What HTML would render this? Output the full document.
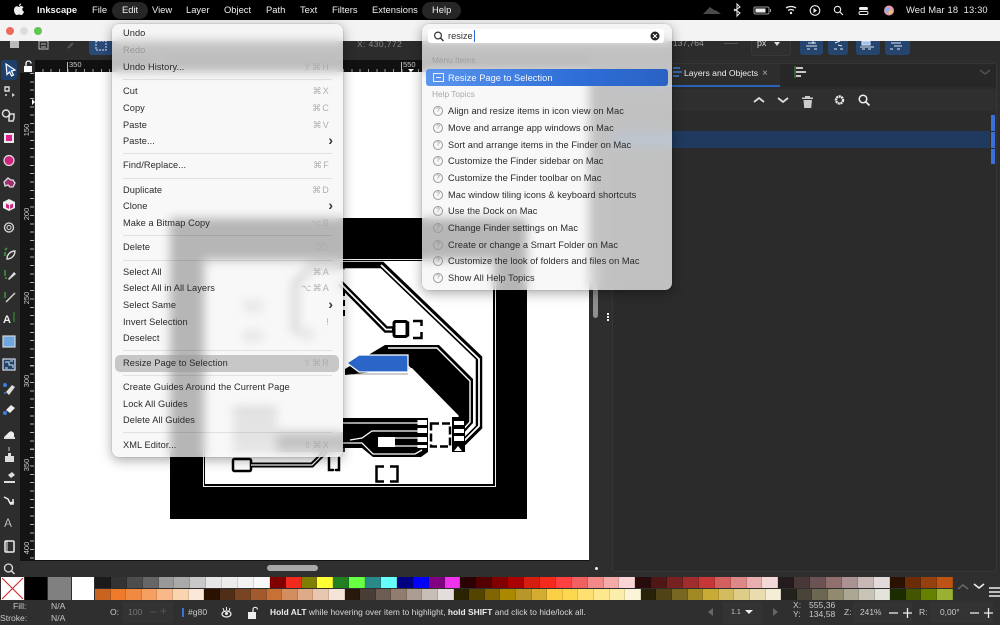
<!DOCTYPE html>
<html><head><meta charset="utf-8"><style>
*{box-sizing:border-box}
html,body{margin:0;padding:0;background:#2c2c2c}
#r{position:relative;width:1000px;height:625px;overflow:hidden;font-family:"Liberation Sans",sans-serif;background:#2d2d2d}
.a{position:absolute;white-space:nowrap}
.mb{position:absolute;top:0;height:20px;line-height:20px;font-size:9.4px;color:#eee;white-space:nowrap}
.menu{position:absolute;border-radius:7px;background:rgba(246,246,246,.74);backdrop-filter:blur(5px);-webkit-backdrop-filter:blur(5px);box-shadow:0 3px 12px rgba(0,0,0,.35),0 0 1px rgba(0,0,0,.4)}
.menu .t{position:absolute;left:11px;font-size:9.25px;line-height:12px;height:12px;color:#2a2a2a;white-space:nowrap;letter-spacing:.06px}
.menu .k{position:absolute;right:13px;font-size:9px;line-height:12px;height:12px;color:#aeaeae;white-space:nowrap;letter-spacing:1.2px}
.menu .s{position:absolute;left:11px;right:11px;height:1px;background:rgba(0,0,0,.09)}
.menu .c{position:absolute;right:10px;font-size:14px;line-height:11px;height:12px;color:#333;font-weight:bold}
.h{position:absolute;left:26px;font-size:9.25px;line-height:12px;height:12px;color:#2a2a2a;white-space:nowrap;letter-spacing:.05px}
.q{position:absolute;left:11px;width:10px;height:10px;border:1px solid #999;border-radius:50%;font-size:6.5px;line-height:8px;text-align:center;color:#888}
.pal{position:absolute;left:95px;width:858px;height:11px;display:flex}
.pal i{flex:1;display:block;border-right:1px solid rgba(0,0,0,.12)}
.g{color:#c9c9c9;font-size:8.6px;position:absolute;white-space:nowrap;line-height:11px}
.vr{position:absolute;left:21px;width:12px;height:20px;font-size:7.5px;color:#ccc}
.vr span{position:absolute;left:-4px;top:4px;width:20px;text-align:center;transform:rotate(-90deg);line-height:12px}
</style></head><body><div id="r">

<!-- canvas -->
<div class="a" style="left:35px;top:72px;width:554px;height:488px;background:#fff"></div>
<svg class="a" style="left:0;top:0" width="1000" height="625" viewBox="0 0 1000 625">
<rect x="170" y="218" width="357" height="301" fill="#000"/>
<rect x="203.500" y="259.500" width="292" height="227" fill="none" stroke="#eee" stroke-width="1"/>
<rect x="205" y="261" width="288" height="223" fill="#fff"/>
<!-- hidden-under-menu faint shapes -->
<path fill="none" stroke="#777" stroke-width="7" d="M345 266H312L295 284V334"/>
<path d="M233 407h44v10h-44zM233 421h44v8h-44zM233 433h44v8h-44zM233 445h44v6h-44z" fill="#888"/>
<path d="M243 300h20v12h-20zM243 330h20v12h-20zM300 328h14v12h-14z" fill="#bbb"/>
<path d="M277 432H345V452H277Z" fill="#333"/>
<!-- trace A -->
<path d="M340 265H382L479 358V427L463 443" fill="none" stroke="#000" stroke-width="6.500"/>
<path d="M381 265L479 359V426L462 443" fill="none" stroke="#fff" stroke-width="1.800"/>
<!-- trace B -->
<path d="M340 283L386 329.500H395" fill="none" stroke="#000" stroke-width="6.500"/>
<path d="M340 283L386 329.500H392" fill="none" stroke="#fff" stroke-width="1.700"/>
<rect x="394" y="321.500" width="13" height="15" rx="1.500" fill="#fff" stroke="#000" stroke-width="3"/>
<path fill="none" stroke="#000" stroke-width="2.500" d="M408 321.500v15M413 321H421.500V326M421.500 332V338H413"/>
<path d="M344 290v30" stroke="#000" stroke-width="2" stroke-dasharray="6 4"/>
<!-- big area -->
<path fill="#000" d="M385 345H439L473 379V423L462 435L458 415L412 368L345 375L345 369Z"/>
<path fill="none" stroke="#fff" stroke-width="1.400" d="M388 348H437L470 381V422L461 432"/>
<path fill="none" stroke="#fff" stroke-width="1.400" d="M408 366L458 416V420"/>
<!-- lower block -->
<path fill="#000" d="M343 418H428V452L421 457H373L362 448H343Z"/>
<path fill="none" stroke="#fff" stroke-width="1.300" d="M343 423H418M343 443H362L373 454H415L422 450M350 440L362 438L372 431H418M395 438H418M395 446H418"/>
<rect x="378" y="437" width="17" height="10" fill="#fff"/>
<path d="M417.500 420h9.500v5h-9.500zM417.500 428h9.500v5h-9.500zM417.500 437h9.500v5h-9.500zM417.500 445h9.500v3h-9.500z" fill="#fff"/>
<!-- center box -->
<path fill="none" stroke="#000" stroke-width="2.500" stroke-dasharray="8 3" d="M431 423.500H450V446.500H431Z"/>
<!-- right pads -->
<path fill="#000" d="M452 417H465V452H452Z"/>
<path d="M454 421h10v4h-10zM454 429h10v4h-10zM454 436h10v5h-10z" fill="#fff"/>
<path d="M458 446l4 5h-8z" fill="#fff"/>
<path fill="none" stroke="#000" stroke-width="2.500" d="M384 466.500H376.500V481.500H384M390 466.500H397.500V481.500H390"/>
<path fill="none" stroke="#000" stroke-width="2.500" stroke-linecap="round" d="M329 458V470H333M339 458V470H336"/>
<rect x="233" y="459" width="18" height="12" rx="1.500" fill="#fff" stroke="#000" stroke-width="2.500"/>
<path fill="none" stroke="#000" stroke-width="5" d="M251 465H312L326 451"/>
<path fill="none" stroke="#fff" stroke-width="1.200" d="M251 465H312L326 451"/>
<path d="M347 363L359 355H408V372H359Z" fill="#2a66c8" stroke="#fff" stroke-width="1.300"/>
<path d="M352 374H408" stroke="#000" stroke-opacity=".2" stroke-width="2"/>
</svg>

<!-- rulers -->
<div class="a" style="left:34px;top:60px;width:555px;height:12px;background:repeating-linear-gradient(90deg,#999 0 1px,transparent 1px 8.35px) 0 9px/100% 3px no-repeat,#111"></div>
<div class="a" style="left:20px;top:60px;width:14px;height:500px;background:#141414"></div>
<div class="a" style="left:30px;top:73px;width:4px;height:487px;background:repeating-linear-gradient(180deg,#aaa 0 1px,transparent 1px 8.35px)"></div>
<div class="a" style="left:20px;top:60px;width:15px;height:13px;background:#2a2a2a"></div>
<div class="g" style="left:69px;top:59px;font-size:7.5px">350</div>
<div class="a" style="left:67px;top:62px;width:1px;height:10px;background:#bbb"></div>
<div class="g" style="left:403px;top:59px;font-size:7.5px">550</div>
<div class="a" style="left:401px;top:62px;width:1px;height:10px;background:#bbb"></div>
<div class="g" style="left:152px;top:59px;font-size:7.5px">400</div>
<div class="a" style="left:408px;top:69px;width:0;height:0;border:3px solid transparent;border-top-color:#fff"></div>
<div class="vr" style="top:120px"><span>150</span></div>
<div class="vr" style="top:204px"><span>200</span></div>
<div class="vr" style="top:288px"><span>250</span></div>
<div class="vr" style="top:371px"><span>300</span></div>
<div class="vr" style="top:455px"><span>350</span></div>
<div class="vr" style="top:538px"><span>400</span></div>
<div class="a" style="left:32px;top:99px;width:0;height:0;border:3px solid transparent;border-left-color:#fff"></div>
<svg class="a" style="left:22px;top:60px" width="12" height="13"><path d="M2 6h8v6H2z" fill="#fff"/><path d="M4 6V3.500a2.500 2.500 0 0 1 5 0" fill="none" stroke="#fff" stroke-width="1.300"/></svg>

<!-- top toolbar -->
<div class="a" style="left:0;top:41px;width:1000px;height:19px;background:#2c2c2c"></div>
<div class="a" style="left:89px;top:41px;width:24px;height:14px;background:#2b4a78;border-radius:0 0 3px 3px"></div>
<svg class="a" style="left:0;top:41px" width="120" height="15"><path d="M10 0h9v7h-9z" fill="#bbb"/><path d="M39 0h9v8h-9z" fill="none" stroke="#bbb"/><path d="M41 3h5M41 6h5" stroke="#bbb"/><path d="M68 7l5-5" stroke="#555" stroke-width="2"/><path d="M96 0h10v9H96z" fill="none" stroke="#d8e4f5" stroke-dasharray="2 1"/></svg>
<div class="g" style="left:357px;top:39px;color:#888;font-size:8.5px;letter-spacing:.4px">X: 430,772</div>
<div class="g" style="left:673px;top:38px;color:#999;font-size:8.5px">137,764</div>
<div class="a" style="left:724px;top:43px;width:14px;height:1px;background:#555"></div>
<div class="a" style="left:751px;top:41px;width:40px;height:15px;background:#2f2f2f;border:1px solid #383838;border-top:0;border-radius:0 0 3px 3px"></div>
<div class="g" style="left:757px;top:38px;font-size:8.8px;color:#ddd">px</div>
<div class="a" style="left:774px;top:42px;width:0;height:0;border:3.500px solid transparent;border-top:4px solid #ddd"></div>
<div class="a" style="left:800px;top:41px;width:23px;height:14px;background:#25446e;border-radius:0 0 3px 3px"></div>
<div class="a" style="left:828px;top:41px;width:20px;height:14px;background:#25446e;border-radius:0 0 3px 3px"></div>
<div class="a" style="left:856px;top:41px;width:24px;height:14px;background:#25446e;border-radius:0 0 3px 3px"></div>
<div class="a" style="left:885px;top:41px;width:25px;height:14px;background:#25446e;border-radius:0 0 3px 3px"></div>
<svg class="a" style="left:800px;top:41px" width="112" height="14"><g stroke="#dfe8f4" stroke-width="1" fill="none"><path d="M8 2h8M13 0v3M6 5h11M7 8h3M14 8h3"/><path d="M35 2l5-2M38 4l4 1M34 8h3M40 8h3"/><path d="M62 0h8v4h-8z" fill="#9fc0e8"/><path d="M60 6h14M62 8h3M68 8h3"/><path d="M91 2h10M94 5h8M90 8h3M97 8h3"/></g></svg>

<!-- left toolbox -->
<div class="a" style="left:0;top:60px;width:20px;height:516px;background:#2d2d2d"></div>
<div class="a" style="left:1px;top:60px;width:16px;height:20px;background:#1e3e6c;border-radius:3px"></div>
<svg class="a" style="left:0;top:60px" width="20" height="516" viewBox="0 60 20 516">
<path d="M6 64l9 6-3.500 1 2 4-2 1-2-4-2.500 2.500z" fill="#2a5ea8" stroke="#fff" stroke-width="1.200"/>
<path d="M5 87h4v4h-4zM6 94v2M9 89" fill="none" stroke="#ddd" stroke-width="1.400"/><path d="M12 93l3 2-3 2z" fill="#ccc"/>
<path d="M6 110a3.500 3.500 0 1 1 0 7a3.500 3.500 0 1 1 0-7M10 114h4v4l-1 3h-4v-4z" fill="none" stroke="#ddd" stroke-width="1.500"/>
<rect x="4" y="133" width="10" height="10" fill="#e9e9e9"/><rect x="6" y="135" width="6" height="6" fill="#e0218a"/>
<circle cx="9" cy="160.500" r="5" fill="#d0257f" stroke="#ddd" stroke-width="1.200"/>
<path d="M4 182l4-4 3 2 2 0 2 3-2 4h-3l-2-2-3 1z" fill="#a03070" stroke="#ddd" stroke-width="1.300"/>
<path d="M9 199l6 3v6l-6 3-6-3v-6z" fill="#eee"/><path d="M9 205l-3-1.500v4l3 1.500zM10 205v4l3-1.500v-4z" fill="#d0257f"/>
<circle cx="9" cy="227.500" r="4.500" fill="none" stroke="#ddd" stroke-width="1.300"/><circle cx="9" cy="227.500" r="2" fill="none" stroke="#ddd"/>
<path d="M5 250l2-2M5 256v-4" stroke="#3c9a3c" stroke-width="1.600"/><path d="M7 259c0-5 4-8 8-8-0 4-3 8-8 8z" fill="none" stroke="#ddd" stroke-width="1.400"/>
<path d="M5 270v6M5 278h2" stroke="#3c9a3c" stroke-width="1.500"/><path d="M8 279l6-7 2 2-7 6z" fill="#ddd"/>
<path d="M5 292v6" stroke="#3c9a3c" stroke-width="1.500"/><path d="M6 302l9-9" stroke="#ddd" stroke-width="1.300"/>
<text x="3" y="323" font-family="Liberation Sans" font-weight="bold" font-size="11" fill="#eee">A</text><path d="M14 312v10" stroke="#3c9a3c" stroke-width="1"/>
<rect x="3" y="336" width="12" height="11" fill="#6ea8df"/><rect x="3" y="336" width="12" height="11" fill="none" stroke="#cfd8e0" stroke-width="1.200"/>
<rect x="3" y="359" width="12" height="11" fill="#1f4468" stroke="#dde" stroke-width="1.200"/><path d="M5 362h4v3h4v3M13 361h-3M5 368h3" stroke="#cfe0f0" fill="none"/>
<path d="M6 392l6-7 3 2-6 8z" fill="#ddd"/><circle cx="5" cy="385" r="2" fill="#3a7fe0"/><circle cx="5" cy="393" r="1" fill="#3a7fe0"/>
<path d="M6 410l5-5 4 3-5 5z" fill="#eee"/><circle cx="5" cy="413" r="2" fill="#3a7fe0"/>
<path d="M4 438c1-3 3-3 4-5l3-2 3 2v5z" fill="#eee"/><path d="M4 437h11v2H4z" fill="#ddd"/>
<path d="M5 456h9v6H5zM8 453h3v3H8z" fill="#ddd"/><path d="M8 447h2v4H8z" fill="#777"/>
<path d="M4 481h11v2H4zM8 475l4-3 3 3-4 3z" fill="#ddd"/>
<path d="M4 497l4 2 2 4 4-1M13 499v5h-3" fill="none" stroke="#eee" stroke-width="1.500"/>
<text x="4" y="527" font-family="Liberation Sans" font-size="12" fill="#ddd" stroke="#2d2d2d" stroke-width=".2">A</text>
<rect x="5" y="541" width="9" height="11" rx="1" fill="none" stroke="#eee" stroke-width="1.500"/><path d="M7 541v11" stroke="#eee"/>
<circle cx="8.500" cy="568" r="4" fill="none" stroke="#ddd" stroke-width="1.300"/><path d="M11.500 571l3 3" stroke="#ddd" stroke-width="1.500"/>
</svg>

<!-- right area -->
<div class="a" style="left:589px;top:60px;width:23px;height:516px;background:#2e2e2e"></div>
<div class="a" style="left:593px;top:260px;width:5px;height:58px;background:#8f8f8f;border-radius:3px"></div>
<div class="a" style="left:607px;top:313px;width:2px;height:2px;background:#eee;box-shadow:0 3px #eee,0 6px #eee"></div>
<div class="a" style="left:595px;top:567px;width:3px;height:3px;background:#eee;border-radius:50%"></div>
<div class="a" style="left:612px;top:63px;width:385px;height:509px;background:#2b2b2b;border:1px solid #363636;border-radius:3px"></div>
<div class="a" style="left:613px;top:64px;width:383px;height:23px;background:#272727"></div>
<div class="a" style="left:613px;top:64px;width:167px;height:21px;background:#2d2d2d"></div>
<div class="a" style="left:613px;top:89px;width:383px;height:22px;background:#2f2f2f;border-radius:3px"></div>
<div class="a" style="left:612px;top:85px;width:168px;height:2px;background:#2a62b8"></div>
<div class="a" style="left:684px;top:68px;font-size:8.6px;color:#eee;line-height:11px">Layers and Objects</div>
<div class="a" style="left:762px;top:68px;font-size:10px;color:#aaa;line-height:11px">×</div>
<svg class="a" style="left:672px;top:60px" width="330" height="60">
<path d="M1 8h7M1 12h9M1 16h6" stroke="#3a7fd5" stroke-width="1.600" fill="none"/>
<path d="M123 6v12" stroke="#3c9a3c"/><path d="M124 8h7M124 12h10M124 16h5" stroke="#ddd" stroke-width="1.800"/>
<path d="M308 10l5 4 5-4" stroke="#555" stroke-width="1.400" fill="none"/>
<path d="M82 42l5-4 5 4M106 38l5 4 5-4" stroke="#ddd" stroke-width="1.800" fill="none"/>
<path d="M133 36h5v1.500h3v1.500h-11v-1.500h3zM131.500 40h8.500l-.8 8h-7z" fill="#ccc"/>
<circle cx="167.500" cy="40" r="3.500" fill="none" stroke="#eee" stroke-width="2.400" stroke-dasharray="2 .6"/>
<circle cx="191" cy="39" r="3.800" fill="none" stroke="#eee" stroke-width="1.500"/><path d="M194 42l3.500 3.500" stroke="#eee" stroke-width="1.800"/>
</svg>
<div class="a" style="left:612px;top:131px;width:378px;height:17px;background:#1f3a5e"></div>
<div class="a" style="left:991px;top:115px;width:4px;height:16px;background:#3a70d8"></div>
<div class="a" style="left:991px;top:132px;width:4px;height:16px;background:#3a70d8"></div>
<div class="a" style="left:991px;top:149px;width:4px;height:15px;background:#3a70d8"></div>

<!-- bottom bars -->
<div class="a" style="left:20px;top:560px;width:569px;height:1px;background:#111"></div>
<div class="a" style="left:20px;top:561px;width:569px;height:15px;background:#2f2f2f"></div>
<div class="a" style="left:267px;top:565px;width:51px;height:6px;background:#a9a9a9;border-radius:3px"></div>
<div class="a" style="left:0;top:576px;width:1000px;height:49px;background:#2f2f2f"></div>
<svg class="a" style="left:1px;top:577px" width="23" height="23"><rect width="23" height="23" fill="#fff"/><path d="M1 1l21 21M22 1L1 22" stroke="#c33" stroke-width="1.200"/></svg>
<div class="a" style="left:25px;top:577px;width:22px;height:23px;background:#000"></div>
<div class="a" style="left:48px;top:577px;width:23px;height:23px;background:#808080"></div>
<div class="a" style="left:72px;top:577px;width:22px;height:23px;background:#fff"></div>
<div class="pal" style="top:577px"><i style="background:#1a1a1a"></i><i style="background:#333"></i><i style="background:#4d4d4d"></i><i style="background:#666"></i><i style="background:#999"></i><i style="background:#aaa"></i><i style="background:#c8c8c8"></i><i style="background:#e6e6e6"></i><i style="background:#ececec"></i><i style="background:#f2f2f2"></i><i style="background:#f9f9f9"></i><i style="background:#800000"></i><i style="background:#f22a1d"></i><i style="background:#808000"></i><i style="background:#ffff33"></i><i style="background:#228020"></i><i style="background:#66ff44"></i><i style="background:#2a8a8a"></i><i style="background:#66ffff"></i><i style="background:#000080"></i><i style="background:#0000ff"></i><i style="background:#800080"></i><i style="background:#ee33ee"></i><i style="background:#2b0000"></i><i style="background:#550000"></i><i style="background:#800000"></i><i style="background:#aa0000"></i><i style="background:#d41f10"></i><i style="background:#f42a1c"></i><i style="background:#ff4040"></i><i style="background:#f06060"></i><i style="background:#f28888"></i><i style="background:#f5aaaa"></i><i style="background:#fbd5d5"></i><i style="background:#280b0b"></i><i style="background:#501616"></i><i style="background:#782121"></i><i style="background:#a02c2c"></i><i style="background:#c83737"></i><i style="background:#d35f5f"></i><i style="background:#de8787"></i><i style="background:#e9afaf"></i><i style="background:#f4d7d7"></i><i style="background:#241c1c"></i><i style="background:#483737"></i><i style="background:#6c5353"></i><i style="background:#916f6f"></i><i style="background:#ac9393"></i><i style="background:#c8b7b7"></i><i style="background:#e3dbdb"></i><i style="background:#2b1100"></i><i style="background:#6b2d08"></i><i style="background:#94400f"></i><i style="background:#bd5416"></i></div>
<div class="pal" style="top:589px"><i style="background:#c86420"></i><i style="background:#ef7a2b"></i><i style="background:#f08a40"></i><i style="background:#f5a060"></i><i style="background:#f8b888"></i><i style="background:#fad4b0"></i><i style="background:#fbe8d8"></i><i style="background:#2b1100"></i><i style="background:#502d16"></i><i style="background:#784421"></i><i style="background:#a05a2c"></i><i style="background:#c87137"></i><i style="background:#d38d5f"></i><i style="background:#deaa87"></i><i style="background:#e9c6af"></i><i style="background:#f4e3d7"></i><i style="background:#28170b"></i><i style="background:#483e37"></i><i style="background:#6c5d53"></i><i style="background:#917c6f"></i><i style="background:#ac9d93"></i><i style="background:#c8beb7"></i><i style="background:#e3dedb"></i><i style="background:#2b2200"></i><i style="background:#554400"></i><i style="background:#806600"></i><i style="background:#aa8800"></i><i style="background:#b8962a"></i><i style="background:#d4ac30"></i><i style="background:#fbcf45"></i><i style="background:#fcd84f"></i><i style="background:#fde070"></i><i style="background:#fde890"></i><i style="background:#fbeeaa"></i><i style="background:#fcf4d8"></i><i style="background:#28220b"></i><i style="background:#504416"></i><i style="background:#786721"></i><i style="background:#a08922"></i><i style="background:#c8ab37"></i><i style="background:#d3bc5f"></i><i style="background:#decd87"></i><i style="background:#e9ddaf"></i><i style="background:#f4eed7"></i><i style="background:#24221c"></i><i style="background:#484437"></i><i style="background:#6c6753"></i><i style="background:#918a6f"></i><i style="background:#aca793"></i><i style="background:#c8c4b7"></i><i style="background:#e3e2db"></i><i style="background:#1c2b00"></i><i style="background:#445500"></i><i style="background:#668000"></i><i style="background:#99b033"></i></div>
<svg class="a" style="left:955px;top:577px" width="45" height="24"><path d="M3 12l5-4 5 4" stroke="#666" stroke-width="1.500" fill="none"/><path d="M19 7l5 4 5-4" stroke="#eee" stroke-width="1.500" fill="none"/><path d="M34 11h11M34 15h11M34 19h11" stroke="#eee" stroke-width="1.500"/></svg>

<!-- status -->
<div class="g" style="left:13px;top:601px">Fill:</div><div class="g" style="left:51px;top:601px">N/A</div>
<div class="g" style="left:0;top:613px">Stroke:</div><div class="g" style="left:51px;top:613px">N/A</div>
<div class="g" style="left:110px;top:607px">O:</div>
<div class="a" style="left:123px;top:602px;width:50px;height:21px;background:#333;border-radius:2px"></div>
<div class="g" style="left:128px;top:607px;color:#777">100</div>
<div class="g" style="left:150px;top:606px;color:#555;font-size:12px">– +</div>
<div class="a" style="left:182px;top:608px;width:2px;height:9px;background:#3a70d8"></div>
<div class="g" style="left:188px;top:607px">#g80</div>
<svg class="a" style="left:220px;top:604px" width="44" height="17"><ellipse cx="6.500" cy="10" rx="4.500" ry="3" fill="none" stroke="#eee" stroke-width="1.300"/><circle cx="6.500" cy="9.500" r="1.500" fill="#eee"/><path d="M3 4l1 3M6.500 3v3M10 4l-1 3" stroke="#eee"/><path d="M28 8h8v7h-8z" fill="#eee"/><path d="M33 8V5.500a2.200 2.200 0 0 1 4.400 0" stroke="#eee" fill="none" stroke-width="1.200"/></svg>
<div class="a" style="left:270px;top:607px;font-size:8.4px;line-height:11px;color:#d8d8d8;letter-spacing:.03px"><b style="color:#eee">Hold ALT</b> while hovering over item to highlight, <b style="color:#eee">hold SHIFT</b> and click to hide/lock all.</div>
<div class="a" style="left:708px;top:608px;width:0;height:0;border:4px solid transparent;border-right:5px solid #666;border-left:0"></div>
<div class="a" style="left:723px;top:602px;width:39px;height:22px;background:#333;border-radius:2px"></div>
<div class="g" style="left:731px;top:607px;font-size:7px">1.1</div>
<div class="a" style="left:745px;top:610px;width:0;height:0;border:4px solid transparent;border-top:4px solid #eee"></div>
<div class="a" style="left:773px;top:608px;width:0;height:0;border:4px solid transparent;border-left:5px solid #666;border-right:0"></div>
<div class="g" style="left:793px;top:600px;font-size:8.6px">X:</div><div class="g" style="left:809px;top:600px;font-size:8.6px">555,36</div>
<div class="g" style="left:793px;top:609px;font-size:8.6px">Y:</div><div class="g" style="left:809px;top:609px;font-size:8.6px">134,58</div>
<div class="g" style="left:844px;top:607px">Z:</div>
<div class="a" style="left:853px;top:602px;width:59px;height:21px;background:#333;border-radius:2px"></div>
<div class="g" style="left:860px;top:607px;font-size:8.4px">241%</div>
<svg class="a" style="left:888px;top:606px" width="24" height="14"><path d="M1 7h9M15 7h9M19.500 2v10" stroke="#eee" stroke-width="1.300"/></svg>
<div class="g" style="left:919px;top:607px">R:</div>
<div class="a" style="left:930px;top:602px;width:63px;height:21px;background:#333;border-radius:2px"></div>
<div class="g" style="left:940px;top:607px;font-size:8.4px">0,00°</div>
<svg class="a" style="left:969px;top:606px" width="24" height="14"><path d="M1 7h9M15 7h9M19.500 2v10" stroke="#eee" stroke-width="1.300"/></svg>

<!-- title bar -->
<div class="a" style="left:0;top:20px;width:1000px;height:21px;background:#f3f3f3"></div>
<div class="a" style="left:6px;top:26.500px;width:8px;height:8px;border-radius:50%;background:#ed6a5e"></div>
<div class="a" style="left:19.500px;top:26.500px;width:8px;height:8px;border-radius:50%;background:#dcdcdc"></div>
<div class="a" style="left:33.500px;top:26.500px;width:8px;height:8px;border-radius:50%;background:#61c554"></div>

<!-- menu bar -->
<div class="a" style="left:0;top:0;width:1000px;height:20px;background:#000"></div>
<div class="a" style="left:112px;top:2px;width:36px;height:17px;border-radius:9px;background:#262626"></div>
<div class="a" style="left:422px;top:2px;width:39px;height:17px;border-radius:9px;background:#262626"></div>
<svg class="a" style="left:13px;top:3px" width="12" height="13" viewBox="0 0 12 13"><path d="M8 3c1 0 2 .5 2.500 1.300-1.800 1-1.500 3.700.5 4.400-.5 1.400-1.500 3.300-2.700 3.300-.8 0-1.200-.5-2.200-.5s-1.400.5-2.200.5C2.500 12 1 9.500 1 7.200 1 4.800 2.500 3.300 4 3.300c.9 0 1.600.6 2.100.6S7 3 8 3zM8.200.5c.1 1.300-1 2.500-2.200 2.400C5.900 1.700 7 .6 8.200.5z" fill="#eee"/></svg>
<div class="mb" style="left:37px;font-weight:bold;color:#f2f2f2">Inkscape</div>
<div class="mb" style="left:92px">File</div>
<div class="mb" style="left:122px">Edit</div>
<div class="mb" style="left:152px">View</div>
<div class="mb" style="left:186px">Layer</div>
<div class="mb" style="left:224px">Object</div>
<div class="mb" style="left:266px">Path</div>
<div class="mb" style="left:300px">Text</div>
<div class="mb" style="left:332px">Filters</div>
<div class="mb" style="left:372px">Extensions</div>
<div class="mb" style="left:432px">Help</div>
<svg class="a" style="left:700px;top:0" width="200" height="20">
<path d="M3 14l7-7 4 3 3 1 4 3z" fill="#4a4a4a"/>
<path d="M34 9l6 4-3 3V4l3 3-6 4" fill="none" stroke="#ddd" stroke-width="1.100"/>
<rect x="54" y="7" width="15" height="7" rx="1.500" fill="none" stroke="#999"/><rect x="55.500" y="8.500" width="10" height="4" fill="#eee"/><path d="M70.500 9v3" stroke="#999"/>
<path d="M86 8c3-2 7-2 10 0M88 10.500c2-1.300 4-1.300 6 0" fill="none" stroke="#eee" stroke-width="1.300"/><circle cx="91" cy="13" r="1.200" fill="#eee"/>
<circle cx="115" cy="10.500" r="4.800" fill="none" stroke="#eee" stroke-width="1.100"/><path d="M113.500 8l3.500 2.500-3.500 2.500z" fill="#eee"/>
<circle cx="137.500" cy="9.500" r="3.200" fill="none" stroke="#eee" stroke-width="1.100"/><path d="M140 12l3 3" stroke="#eee" stroke-width="1.200"/>
<rect x="159" y="7" width="9" height="3" rx="1.500" fill="#eee"/><rect x="159" y="11.500" width="9" height="3" rx="1.500" fill="none" stroke="#eee"/>
<circle cx="189" cy="10.500" r="5" fill="#e89ab0"/><circle cx="187.500" cy="10" r="2.500" fill="#8ab0e8"/><circle cx="190.500" cy="12" r="2" fill="#f0c070"/>
</svg>
<div class="mb" style="left:906px;letter-spacing:.13px;color:#e8e8e8">Wed Mar 18&nbsp; 13:30</div>

<!-- Edit menu -->
<div class="menu" style="left:112px;top:24px;width:231px;height:433px">
<div class="t" style="top:3px">Undo</div>
<div class="t" style="top:20px;color:#999">Redo</div>
<div class="t" style="top:37px">Undo History...</div><div class="k" style="top:37px">⇧⌘H</div>
<div class="s" style="top:55px"></div>
<div class="t" style="top:61px">Cut</div><div class="k" style="top:61px">⌘X</div>
<div class="t" style="top:78px">Copy</div><div class="k" style="top:78px">⌘C</div>
<div class="t" style="top:95px">Paste</div><div class="k" style="top:95px">⌘V</div>
<div class="t" style="top:111px">Paste...</div><div class="c" style="top:111px">›</div>
<div class="s" style="top:129px"></div>
<div class="t" style="top:135px">Find/Replace...</div><div class="k" style="top:135px">⌘F</div>
<div class="s" style="top:154px"></div>
<div class="t" style="top:160px">Duplicate</div><div class="k" style="top:160px">⌘D</div>
<div class="t" style="top:176px">Clone</div><div class="c" style="top:176px">›</div>
<div class="t" style="top:193px">Make a Bitmap Copy</div><div class="k" style="top:193px">⌥B</div>
<div class="s" style="top:211px"></div>
<div class="t" style="top:217px">Delete</div><div class="k" style="top:217px">⌦</div>
<div class="s" style="top:236px"></div>
<div class="t" style="top:242px">Select All</div><div class="k" style="top:242px">⌘A</div>
<div class="t" style="top:258px">Select All in All Layers</div><div class="k" style="top:258px">⌥⌘A</div>
<div class="t" style="top:275px">Select Same</div><div class="c" style="top:275px">›</div>
<div class="t" style="top:292px">Invert Selection</div><div class="k" style="top:292px">!</div>
<div class="t" style="top:308px">Deselect</div>
<div class="s" style="top:326px"></div>
<div class="a" style="left:3px;top:331px;width:224px;height:17px;border-radius:5px;background:rgba(150,150,150,.5)"></div>
<div class="t" style="top:333px">Resize Page to Selection</div><div class="k" style="top:333px">⇧⌘R</div>
<div class="s" style="top:351px"></div>
<div class="t" style="top:357px">Create Guides Around the Current Page</div>
<div class="t" style="top:374px">Lock All Guides</div>
<div class="t" style="top:390px">Delete All Guides</div>
<div class="s" style="top:408px"></div>
<div class="t" style="top:415px">XML Editor...</div><div class="k" style="top:415px">⇧⌘X</div>
</div>

<!-- Help menu -->
<div class="menu" style="left:422px;top:24px;width:250px;height:266px">
<div class="a" style="left:6px;top:5px;width:236px;height:14px;background:#fff;border-radius:3px"></div>
<svg class="a" style="left:11px;top:6px" width="14" height="13"><circle cx="5" cy="5.500" r="3.400" fill="none" stroke="#333" stroke-width="1.200"/><path d="M7.500 8l3 3" stroke="#333" stroke-width="1.400"/></svg>
<div class="a" style="left:26px;top:6px;font-size:9.25px;line-height:12px;color:#333">resize</div>
<div class="a" style="left:52px;top:6px;width:1px;height:12px;background:#2a6ce0"></div>
<svg class="a" style="left:228px;top:7px" width="10" height="10"><circle cx="5" cy="5" r="4.500" fill="#222"/><path d="M3 3l4 4M7 3l-4 4" stroke="#fff"/></svg>
<div class="a" style="left:10px;top:31px;font-size:8.3px;line-height:11px;color:#a0a0a0">Menu Items</div>
<div class="a" style="left:4px;top:45px;width:242px;height:17px;border-radius:3px;background:linear-gradient(90deg,#5a95ee,#2f6fd8 60%,#2a62c4)"></div>
<svg class="a" style="left:11px;top:48px" width="12" height="11"><rect x=".5" y="1.500" width="10" height="8" fill="none" stroke="#e8f0fc"/><path d="M3 5.500h5" stroke="#e8f0fc"/></svg>
<div class="h" style="top:48px;color:#f4f8ff">Resize Page to Selection</div>
<div class="a" style="left:10px;top:65px;font-size:8.3px;line-height:11px;color:#a8a8a8">Help Topics</div>
<div class="q" style="top:82px">?</div><div class="h" style="top:81px">Align and resize items in icon view on Mac</div>
<div class="q" style="top:99px">?</div><div class="h" style="top:98px">Move and arrange app windows on Mac</div>
<div class="q" style="top:116px">?</div><div class="h" style="top:115px">Sort and arrange items in the Finder on Mac</div>
<div class="q" style="top:132px">?</div><div class="h" style="top:131px">Customize the Finder sidebar on Mac</div>
<div class="q" style="top:149px">?</div><div class="h" style="top:148px">Customize the Finder toolbar on Mac</div>
<div class="q" style="top:166px">?</div><div class="h" style="top:165px">Mac window tiling icons &amp; keyboard shortcuts</div>
<div class="q" style="top:182px">?</div><div class="h" style="top:181px">Use the Dock on Mac</div>
<div class="q" style="top:199px">?</div><div class="h" style="top:198px">Change Finder settings on Mac</div>
<div class="q" style="top:216px">?</div><div class="h" style="top:215px">Create or change a Smart Folder on Mac</div>
<div class="q" style="top:232px">?</div><div class="h" style="top:231px">Customize the look of folders and files on Mac</div>
<div class="q" style="top:249px">?</div><div class="h" style="top:248px">Show All Help Topics</div>
</div>

</div></body></html>
